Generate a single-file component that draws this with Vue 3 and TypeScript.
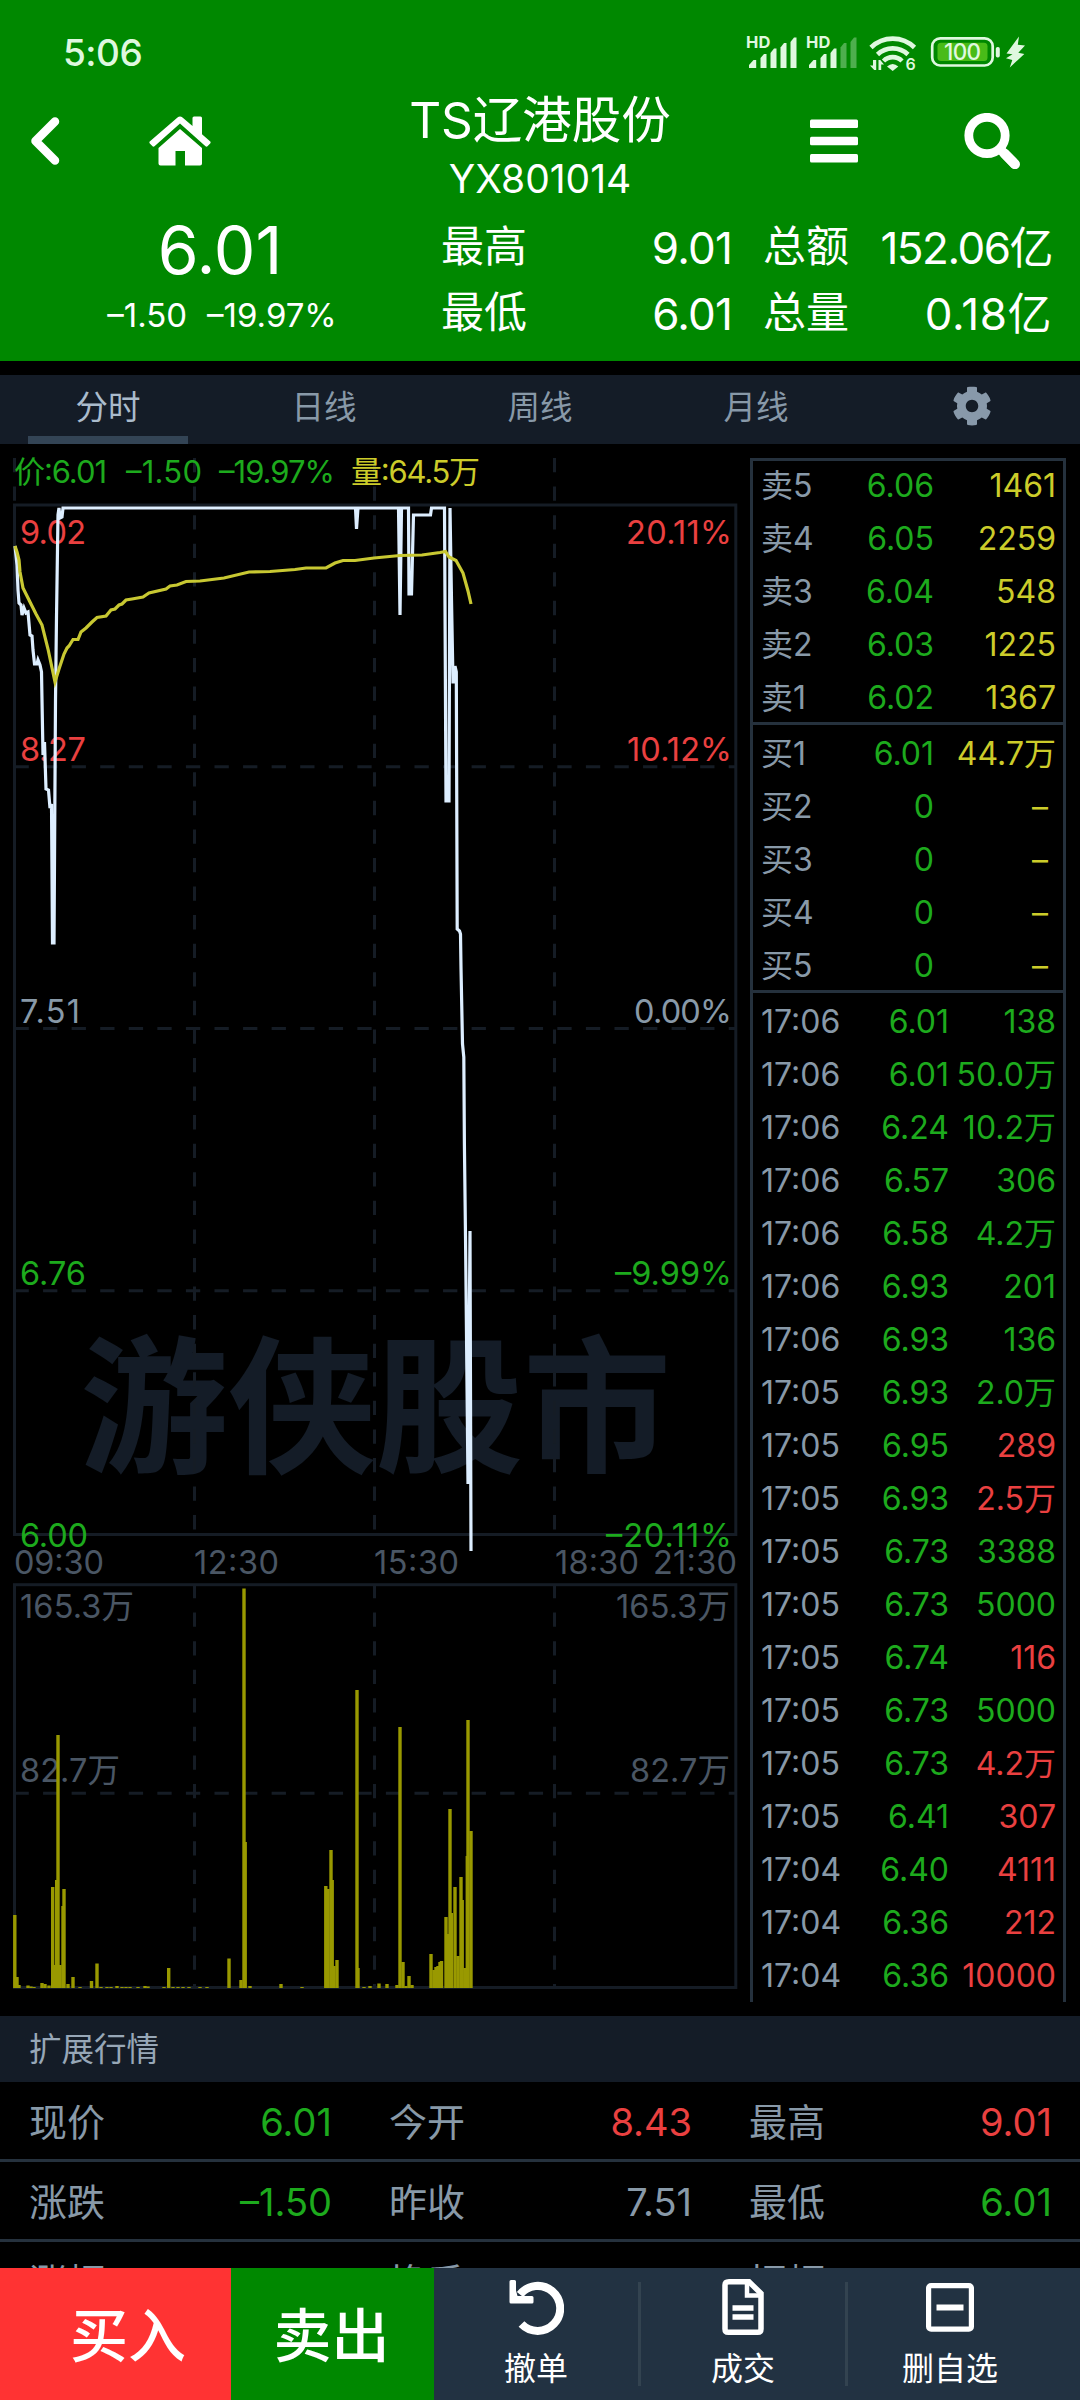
<script setup lang="ts">
type Tone = 'up' | 'down' | 'flat' | 'vol' | 'axis'

interface Label {
  x: number
  y: number
  w: number
  text: string
  tone: Tone
  size?: number
}

interface Row {
  label: string
  price: string
  amount: string
  tone?: Tone
}

const tabs = ['分时', '日线', '周线', '月线']

const sells: Row[] = [
  { label: '卖5', price: '6.06', amount: '1461' },
  { label: '卖4', price: '6.05', amount: '2259' },
  { label: '卖3', price: '6.04', amount: '548' },
  { label: '卖2', price: '6.03', amount: '1225' },
  { label: '卖1', price: '6.02', amount: '1367' },
]

const buys: Row[] = [
  { label: '买1', price: '6.01', amount: '44.7万' },
  { label: '买2', price: '0', amount: '–' },
  { label: '买3', price: '0', amount: '–' },
  { label: '买4', price: '0', amount: '–' },
  { label: '买5', price: '0', amount: '–' },
]

const ticks: Row[] = [
  { label: '17:06', price: '6.01', amount: '138', tone: 'down' },
  { label: '17:06', price: '6.01', amount: '50.0万', tone: 'down' },
  { label: '17:06', price: '6.24', amount: '10.2万', tone: 'down' },
  { label: '17:06', price: '6.57', amount: '306', tone: 'down' },
  { label: '17:06', price: '6.58', amount: '4.2万', tone: 'down' },
  { label: '17:06', price: '6.93', amount: '201', tone: 'down' },
  { label: '17:06', price: '6.93', amount: '136', tone: 'down' },
  { label: '17:05', price: '6.93', amount: '2.0万', tone: 'down' },
  { label: '17:05', price: '6.95', amount: '289', tone: 'up' },
  { label: '17:05', price: '6.93', amount: '2.5万', tone: 'up' },
  { label: '17:05', price: '6.73', amount: '3388', tone: 'down' },
  { label: '17:05', price: '6.73', amount: '5000', tone: 'down' },
  { label: '17:05', price: '6.74', amount: '116', tone: 'up' },
  { label: '17:05', price: '6.73', amount: '5000', tone: 'down' },
  { label: '17:05', price: '6.73', amount: '4.2万', tone: 'up' },
  { label: '17:05', price: '6.41', amount: '307', tone: 'up' },
  { label: '17:04', price: '6.40', amount: '4111', tone: 'up' },
  { label: '17:04', price: '6.36', amount: '212', tone: 'up' },
  { label: '17:04', price: '6.36', amount: '10000', tone: 'up' },
]

const details: { label: string; value: string; tone: Tone }[][] = [
  [
    { label: '现价', value: '6.01', tone: 'down' },
    { label: '今开', value: '8.43', tone: 'up' },
    { label: '最高', value: '9.01', tone: 'up' },
  ],
  [
    { label: '涨跌', value: '–1.50', tone: 'down' },
    { label: '昨收', value: '7.51', tone: 'flat' },
    { label: '最低', value: '6.01', tone: 'down' },
  ],
  [
    { label: '涨幅', value: '–19.97%', tone: 'down' },
    { label: '换手', value: '11.04%', tone: 'flat' },
    { label: '振幅', value: '39.95%', tone: 'flat' },
  ],
]

// x is the left edge of the text, w its advance width
const labels: Label[] = [
  { x: 14, y: 482.5, w: 93, text: '价:6.01', tone: 'down', size: 31 },
  { x: 126, y: 482.5, w: 76, text: '–1.50', tone: 'down', size: 31 },
  { x: 219, y: 482.5, w: 116, text: '–19.97%', tone: 'down', size: 31 },
  { x: 351, y: 482.5, w: 129, text: '量:64.5万', tone: 'vol', size: 31 },
  { x: 20, y: 543.5, w: 66, text: '9.02', tone: 'up' },
  { x: 20, y: 760.5, w: 66, text: '8.27', tone: 'up' },
  { x: 20, y: 1022.5, w: 60, text: '7.51', tone: 'flat' },
  { x: 20, y: 1285, w: 66, text: '6.76', tone: 'down' },
  { x: 20, y: 1546.5, w: 68, text: '6.00', tone: 'down' },
  { x: 626, y: 543.5, w: 106, text: '20.11%', tone: 'up' },
  { x: 627, y: 760.5, w: 105, text: '10.12%', tone: 'up' },
  { x: 634, y: 1022.5, w: 98, text: '0.00%', tone: 'flat' },
  { x: 615, y: 1285, w: 117, text: '–9.99%', tone: 'down' },
  { x: 606, y: 1546.5, w: 126, text: '–20.11%', tone: 'down' },
  { x: 14, y: 1573.5, w: 90, text: '09:30', tone: 'axis' },
  { x: 194, y: 1573.5, w: 85, text: '12:30', tone: 'axis' },
  { x: 374, y: 1573.5, w: 85, text: '15:30', tone: 'axis' },
  { x: 555, y: 1573.5, w: 84, text: '18:30', tone: 'axis' },
  { x: 653, y: 1573.5, w: 84, text: '21:30', tone: 'axis' },
  { x: 20, y: 1617.5, w: 114, text: '165.3万', tone: 'axis' },
  { x: 20, y: 1781.5, w: 100, text: '82.7万', tone: 'axis' },
  { x: 616, y: 1617.5, w: 114, text: '165.3万', tone: 'axis' },
  { x: 630, y: 1781.5, w: 100, text: '82.7万', tone: 'axis' },
]

const price: number[][] = [
  [15, 546], [17, 565], [18, 590], [19, 603], [21, 605], [22, 615], [24, 608], [26, 613], [28, 612],
  [30, 635], [32, 636], [33, 650], [34.5, 664], [37, 664], [38, 660], [40, 665], [41.5, 672], [42, 700],
  [43, 755], [44.5, 742], [46, 789], [48.5, 790], [50, 808], [51.5, 804], [52.5, 943], [54, 943], [55.5, 700], [56.5, 617],
  [58, 515], [59, 508], [60, 518], [62, 517], [63, 508], [355.5, 508], [356.5, 529], [358, 508], [398.5, 508],
  [400, 615], [401.5, 508], [408.5, 508], [409, 594], [411.5, 594], [413.5, 515], [430.5, 515],
  [431.5, 508], [444.5, 508], [446, 801], [449, 801], [450, 508], [451.5, 600], [453, 682], [455, 682],
  [455, 666], [456.3, 672], [457.2, 929], [459.5, 931], [460.5, 934], [461, 968], [462.5, 1044],
  [463.8, 1057], [464.4, 1144], [465.5, 1236], [468, 1484], [470, 1231], [471, 1551],
]

const average: number[][] = [
  [15, 546], [17, 552], [19, 560], [20, 572], [23, 588], [30, 602], [36, 614], [42, 625], [48, 649],
  [55, 682], [59, 669], [64, 654], [67, 648], [69, 646], [73, 639.5], [78, 639.5], [81, 632], [86, 628],
  [92, 622], [97, 617.5], [106, 616], [111, 610], [115, 609], [119, 605], [122, 604], [126, 600],
  [132, 599], [143, 597], [149, 593], [166, 589], [170, 586], [177, 585], [186, 581.5], [200, 581],
  [224, 578], [249, 572], [270, 571.5], [295, 569.5], [306, 568], [326, 568], [335, 563], [343, 560.5],
  [355, 560.5], [374, 558], [400, 555.5], [422, 555], [440, 552.5], [445.5, 551.5], [449, 557],
  [456, 560.5], [463, 573], [468, 591], [471, 604],
]

// [centre x, height] above the volume baseline
const bars: number[][] = [
  [14.8, 73], [17, 11], [19, 3], [28, 2.5], [31, 1.5], [34, 1], [42, 5], [45, 4], [49, 2.5], [52.7, 101], [55, 23],
  [56.7, 108], [58, 253], [60, 23], [63, 82], [64, 99], [68, 4], [73, 11], [80, 1], [91.5, 7], [97, 24.5],
  [101, 1], [107, 1], [111, 1], [117, 2], [122, 1], [126, 1], [130, 1], [138, 1], [145, 2], [148, 1.5],
  [164, 1], [168.7, 20], [173, 1], [178, 1], [183, 1], [189, 1], [200, 1], [207, 1], [229, 29.5], [241, 8], [244, 399.5],
  [245.2, 146], [250, 2], [281, 4], [302, 1], [325.8, 102], [328, 99], [331, 138], [332.2, 108], [334, 22], [337, 28],
  [357, 298], [358, 20], [364, 1], [370, 2], [379, 4.5], [387, 4], [397, 3], [400, 261], [403, 26],
  [406, 2], [409, 12], [412, 3], [431, 34], [434, 18], [436, 21], [438, 22], [440, 26], [441.5, 27], [446, 71], [448, 54],
  [450, 179], [451.3, 75], [455, 101], [458, 32], [461, 111], [462.2, 88], [465, 20], [467.3, 132], [468, 268], [471, 157],
]

const toPoints = (pts: number[][]): string => pts.map((p) => p.join(',')).join(' ')

const signals = [
  { x: 0, strength: 5 },
  { x: 60, strength: 3 },
]
const signalBars = [
  'M749 68v-3l4.500-5h2.700v8z',
  'M760.500 68v-10l3.500-4h2.500v14z',
  'M770.500 68v-15l3.500-4.500h2.500v19.500z',
  'M780.500 68v-20.500l3.500-4.500h2.500v25z',
  'M790.500 68v-26l3.500-4.500h2.500v30.500z',
]
</script>

<template>
  <div class="screen">
    <header class="top">
      <div class="status">
        <span class="clock">5:06</span>
        <svg class="status-icons" viewBox="740 30 290 45" width="290" height="45" fill="#dff8df">
          <g v-for="s in signals" :key="s.x" :transform="`translate(${s.x} 0)`">
            <text x="746" y="48" font-size="16.5" font-weight="700" textLength="24.500">HD</text>
            <path v-for="(d, i) in signalBars" :key="i" :d="d" :opacity="i < s.strength ? 1 : 0.35" />
          </g>
          <g fill="none" stroke="#dff8df" stroke-width="4.600">
            <path d="M871 47.500a31 31 0 0 1 43.500 0" />
            <path d="M877.500 54.500a22 22 0 0 1 30.500 0" />
            <path d="M883.500 61a13 13 0 0 1 18.500 0" />
          </g>
          <path d="M887 66.500q5.700-5 11.300 0l-5.600 4.500z" />
          <path d="M876.200 60v10h-2l-4.200-4.500h3v-5.500zM878.500 70v-10h1.800l3.700 4.500h-2.800v5.500z" />
          <text x="905.500" y="70" font-size="16" font-weight="600">6</text>
          <rect x="932.200" y="38.300" width="60.500" height="27.200" rx="8" fill="none" stroke="#dff8df" stroke-width="2.700" />
          <rect x="937.500" y="42.700" width="50" height="18.300" rx="3.500" fill="#49bb18" />
          <text x="944" y="60" font-size="22.500" font-weight="500" textLength="37">100</text>
          <rect x="995.800" y="47" width="4" height="10.500" rx="1.800" />
          <path d="M1019 36.500l-12.500 17 6 .7-6.500 4 6.300 1.800-2.500 7.500 14.500-13.500-6-1.200 6.700-7.300-7.200-.8z" />
        </svg>
      </div>

      <nav class="nav">
        <span class="nav-item">
          <svg width="30" height="48" viewBox="0 0 30 48">
            <path d="M25 4.500L5.500 24 25 43.500" fill="none" stroke="#fff" stroke-width="8.500" stroke-linejoin="round" stroke-linecap="round" />
          </svg>
        </span>
        <span class="nav-item">
          <svg width="62" height="50" viewBox="0 0 62 50" fill="#fff">
            <path d="M31 .5q1.300 0 2.500 1L43.500 10V2q0-1.500 1.500-1.500h6.500q1.500 0 1.500 1.500v16.200l8 7q1.200 1 .2 2.200l-2.500 2.700q-1 1.200-2.200.2L31 7.500 5.500 30.300q-1.200 1-2.200-.2L.8 27.400q-1-1.200.2-2.200L28.500 1.500q1.200-1 2.500-1z" />
            <path d="M31 13L53 32v15.500q0 2-2 2H36V35H26.500v14.500H11.500q-2 0-2-2V32z" />
          </svg>
        </span>
        <div class="title">
          <div class="name">TS辽港股份</div>
          <div class="code">YX801014</div>
        </div>
        <span class="nav-item">
          <svg width="48" height="44" viewBox="0 0 48 44" fill="#fff">
            <rect y=".5" width="48" height="8.500" rx="1.500" />
            <rect y="17.700" width="48" height="8.500" rx="1.500" />
            <rect y="35" width="48" height="8.500" rx="1.500" />
          </svg>
        </span>
        <span class="nav-item search">
          <svg width="56" height="56" viewBox="0 0 56 56" fill="none" stroke="#fff">
            <circle cx="23" cy="22.500" r="18.200" stroke-width="8.800" />
            <path d="M37.500 37.500L51.500 52" stroke-width="9" />
            <path d="M40.500 40.500L51 51.200" stroke-width="10" stroke-linecap="round" />
          </svg>
        </span>
      </nav>

      <section class="quote">
        <div class="last">
          <div class="last-price">6.01</div>
          <div class="last-change"><span>–1.50</span><span>–19.97%</span></div>
        </div>
        <div class="stats">
          <span class="k">最高</span><span class="v">9.01</span><span class="k">总额</span><span class="v long">152.06亿</span>
          <span class="k">最低</span><span class="v">6.01</span><span class="k">总量</span><span class="v short">0.18亿</span>
        </div>
      </section>
    </header>

    <div class="tabs">
      <span v-for="(tab, i) in tabs" :key="tab" class="tab" :class="{ active: i === 0 }">{{ tab }}</span>
      <span class="tab gear">
        <svg width="40" height="40" viewBox="0 0 512 512" fill="#8899aa">
          <path d="M487.400 315.700l-42.600-24.600c4.300-23.200 4.300-47 0-70.200l42.600-24.600c4.900-2.800 7.100-8.600 5.500-14-11.100-35.600-30-67.800-54.700-94.600-3.800-4.100-10-5.100-14.800-2.300L380.800 110c-17.900-15.400-38.500-27.300-60.800-35.100V25.800c0-5.600-3.900-10.500-9.400-11.700-36.700-8.200-74.300-7.800-109.200 0-5.500 1.200-9.400 6.100-9.400 11.700V75c-22.200 7.900-42.800 19.800-60.800 35.100L88.700 85.500c-4.900-2.800-11-1.900-14.800 2.300-24.700 26.700-43.600 58.900-54.700 94.600-1.700 5.400.6 11.200 5.500 14L67.300 221c-4.300 23.200-4.300 47 0 70.200l-42.600 24.600c-4.900 2.800-7.100 8.600-5.500 14 11.100 35.600 30 67.800 54.700 94.600 3.800 4.100 10 5.100 14.800 2.300l42.600-24.600c17.900 15.400 38.500 27.300 60.800 35.100v49.200c0 5.600 3.900 10.500 9.400 11.700 36.700 8.200 74.300 7.800 109.200 0 5.500-1.200 9.400-6.100 9.400-11.700v-49.200c22.200-7.900 42.800-19.800 60.800-35.100l42.600 24.600c4.900 2.800 11 1.900 14.800-2.300 24.700-26.700 43.600-58.900 54.700-94.600 1.500-5.500-.7-11.300-5.600-14.100zM256 336c-44.100 0-80-35.900-80-80s35.900-80 80-80 80 35.900 80 80-35.900 80-80 80z" />
        </svg>
      </span>
    </div>

    <main class="market">
      <svg class="chart" viewBox="0 444 750 1572" width="750" height="1572">
        <text class="watermark" x="80" y="1461" font-size="148" textLength="591">游侠股市</text>
        <g class="grid" fill="none">
          <rect x="14.500" y="505" width="721.300" height="1029.500" />
          <rect x="14.500" y="1584.700" width="721.300" height="402.800" />
          <g stroke-dasharray="14.300 14.270">
            <path d="M14.500 458V505M194.500 458V1534M374.500 458V1534M554.500 458V1534" />
            <path d="M14.500 766.700H735M14.500 1028.500H735M14.500 1290.700H735M14.500 1793.300H735" />
            <path d="M194.500 1584V1987M374.500 1584V1987M554.500 1584V1987" />
          </g>
        </g>
        <text
          v-for="(l, i) in labels"
          :key="i"
          :x="l.x"
          :y="l.y"
          :class="l.tone"
          :font-size="l.size ?? 32.5"
          :textLength="l.w"
        >{{ l.text }}</text>
        <rect v-for="(b, i) in bars" :key="i" class="bar" :x="b[0] - 1.7" :y="1988 - b[1]" width="3.400" :height="b[1]" />
        <polyline class="line" :points="toPoints(price)" stroke="#ddeeff" />
        <polyline class="line" :points="toPoints(average)" stroke="#c8c832" />
      </svg>

      <aside class="book">
        <div class="sells">
          <div v-for="r in sells" :key="r.label" class="row">
            <span>{{ r.label }}</span><span class="p down">{{ r.price }}</span><span class="a vol">{{ r.amount }}</span>
          </div>
        </div>
        <div class="buys">
          <div v-for="r in buys" :key="r.label" class="row">
            <span>{{ r.label }}</span><span class="p down">{{ r.price }}</span>
            <span class="a vol" :class="{ dash: r.amount === '–' }">{{ r.amount }}</span>
          </div>
        </div>
        <div class="ticks">
          <div v-for="(r, i) in ticks" :key="i" class="row">
            <span>{{ r.label }}</span><span class="p down">{{ r.price }}</span><span class="a" :class="r.tone">{{ r.amount }}</span>
          </div>
        </div>
      </aside>
    </main>

    <section class="extra">
      <h2>扩展行情</h2>
      <div v-for="(line, i) in details" :key="i" class="detail-row">
        <div v-for="c in line" :key="c.label" class="cell">
          <span>{{ c.label }}</span><span :class="c.tone">{{ c.value }}</span>
        </div>
      </div>
    </section>

    <footer class="actions">
      <button class="buy">买入</button>
      <button class="sell">卖出</button>
      <div class="tools">
        <button class="tool">
          <svg width="56" height="60" viewBox="0 0 56 60" fill="none" stroke="#fff">
            <path d="M12 17.500A22.500 22.500 0 1 1 13.500 47" stroke-width="8" />
            <path d="M1.500 4.500q0-1.500 1.500-1.500h3.500q1.500 0 1.500 1.500v9l1.500 5.500h14.500q1.500 0 1.500 1.500v4.500q0 1.500-1.500 1.500H3q-1.500 0-1.500-1.500z" fill="#fff" stroke="none" />
          </svg>
          <span>撤单</span>
        </button>
        <button class="tool">
          <svg width="42" height="60" viewBox="0 0 42 60" fill="none" stroke="#fff" stroke-width="5.500">
            <path d="M7 4.700H27L39 16.500V52q0 3.300-3.300 3.300H6.300Q3 55.300 3 52V8Q3 4.700 7 4.700z" />
            <path d="M25 5v13.500h13.500" stroke-width="4.500" />
            <path d="M10.500 31h21M10.500 40h21" />
          </svg>
          <span>成交</span>
        </button>
        <button class="tool">
          <svg width="48" height="60" viewBox="0 0 48 60" fill="none" stroke="#fff" stroke-width="5.200">
            <rect x="2.600" y="8.600" width="42.800" height="43.600" rx="2.500" />
            <path d="M10.500 30.500h27" stroke-width="6" />
          </svg>
          <span>删自选</span>
        </button>
      </div>
    </footer>
  </div>
</template>

<style>
body {
  margin: 0;
  background: #000;
}
</style>

<style scoped>
.screen {
  width: 1080px;
  height: 2400px;
  display: flex;
  flex-direction: column;
  overflow: hidden;
  background: #000;
  color: #8899a8;
  font-family: Inter, 'Noto Sans CJK SC', sans-serif;
}

.up { color: #ea4040; fill: #ea4040; }
.down { color: #1daa1d; fill: #1daa1d; }
.flat { color: #8899a8; fill: #8899a8; }
.vol { color: #cccc2a; fill: #cccc2a; }
.axis { fill: #4a5664; }

.top {
  height: 361px;
  flex: none;
  background: #008800;
  color: #fff;
}
.status {
  box-sizing: border-box;
  height: 90px;
  padding: 15px 50px 0 63px;
  display: flex;
  align-items: center;
  justify-content: space-between;
}
.clock {
  font-size: 37px;
  font-weight: 500;
  color: #dff8df;
  letter-spacing: -0.5px;
}
.nav {
  height: 118px;
  display: grid;
  grid-template-columns: 90px 180px 540px 48px 222px;
}
.nav-item {
  display: flex;
  align-items: center;
  justify-content: center;
  padding-bottom: 17px;
}
.search {
  padding-left: 45px;
}
.title {
  padding-top: 1px;
  text-align: center;
}
.name {
  font-size: 49.5px;
  line-height: 58px;
}
.code {
  font-size: 39px;
  line-height: 60px;
}
.quote {
  display: flex;
}
.last {
  width: 440px;
  text-align: center;
}
.last-price {
  font-size: 66px;
  line-height: 84px;
}
.last-change {
  display: flex;
  justify-content: center;
  gap: 20px;
  padding-left: 4px;
  font-size: 33px;
  line-height: 46px;
}
.stats {
  display: grid;
  grid-template-columns: 89px 202px 31px 89px 200px;
  grid-auto-rows: 66px;
  padding: 7px 0 0 1px;
  font-size: 44px;
  line-height: 66px;
}
.stats .k {
  font-size: 43px;
  line-height: 63px;
}
.stats .k:nth-child(4n + 3) {
  grid-column: 4;
}
.stats .v {
  text-align: right;
  white-space: nowrap;
  letter-spacing: -0.8px;
}
.stats .v:nth-child(4n) {
  grid-column: 5;
}
.stats .long {
  letter-spacing: -1.5px;
}
.stats .short {
  letter-spacing: 0.5px;
}

.tabs {
  height: 69px;
  margin-top: 14px;
  flex: none;
  display: flex;
  background: #141c27;
}
.tab {
  flex: 1;
  display: flex;
  align-items: center;
  justify-content: center;
  box-sizing: border-box;
  padding-bottom: 11px;
  font-size: 32.5px;
}
.gear {
  padding-bottom: 7px;
}
.tab.active {
  color: #aabbcc;
  background: linear-gradient(#334455, #334455) center bottom / 160px 8px no-repeat;
}

.market {
  height: 1572px;
  flex: none;
  display: flex;
  align-items: flex-start;
}
.chart {
  flex: none;
  display: block;
}
.watermark {
  fill: #141c27;
  font-weight: 700;
}
.grid {
  stroke: #151c25;
  stroke-width: 3px;
}
.bar {
  fill: #999900;
}
.line {
  fill: none;
  stroke-width: 3.2px;
}

.book {
  width: 310px;
  height: 1541px;
  margin-top: 14px;
  border: 3px solid #25313d;
  border-bottom: 0;
  font-size: 32px;
}
.sells,
.buys {
  display: flex;
  flex-direction: column;
  border-bottom: 3px solid #25313d;
}
.sells {
  height: 261px;
  justify-content: center;
}
.buys {
  height: 263px;
  padding-top: 2px;
}
.ticks {
  padding-top: 2px;
}
.row {
  height: 53px;
  flex: none;
  display: grid;
  grid-template-columns: 97px 76px 122px;
  padding-left: 8px;
  line-height: 53px;
}
.ticks .row {
  grid-template-columns: 96px 92px 107px;
}
.row span {
  white-space: nowrap;
}
.row .p,
.row .a {
  display: flex;
  justify-content: flex-end;
}
.row .dash {
  padding-right: 8px;
}

.extra {
  height: 252px;
  flex: none;
  overflow: hidden;
}
h2 {
  margin: 0;
  height: 66px;
  padding-left: 29px;
  background: #141c27;
  font-size: 32.5px;
  font-weight: 400;
  line-height: 68px;
  color: #97a7b7;
}
.detail-row {
  display: flex;
  height: 77px;
  border-bottom: 3px solid #25313d;
}
.cell {
  flex: 1;
  display: flex;
  justify-content: space-between;
  padding: 0 28px 0 29px;
  font-size: 38px;
  line-height: 80px;
}

.actions {
  height: 132px;
  flex: none;
  display: flex;
  color: #fff;
}
button {
  margin: 0;
  padding: 0;
  border: 0;
  background: none;
  font-family: inherit;
  color: inherit;
}
.buy,
.sell {
  padding-top: 4px;
  font-size: 58px;
  font-weight: 500;
  line-height: 128px;
}
.buy {
  width: 231px;
  padding-left: 25px;
  background: #ff3333;
}
.sell {
  width: 203px;
  padding-right: 2px;
  background: #008800;
}
.tools {
  flex: 1;
  display: flex;
  align-items: center;
  padding-right: 28px;
  background: #223242;
}
.tool {
  flex: 1;
  height: 104px;
  display: flex;
  flex-direction: column;
  align-items: center;
  justify-content: flex-end;
  font-size: 32px;
  line-height: 44px;
}
.tool svg {
  flex: none;
  display: block;
  margin-bottom: 10px;
}
.tool span {
  margin-bottom: -5px;
}
.tool + .tool {
  border-left: 3px solid #334350;
}
</style>
